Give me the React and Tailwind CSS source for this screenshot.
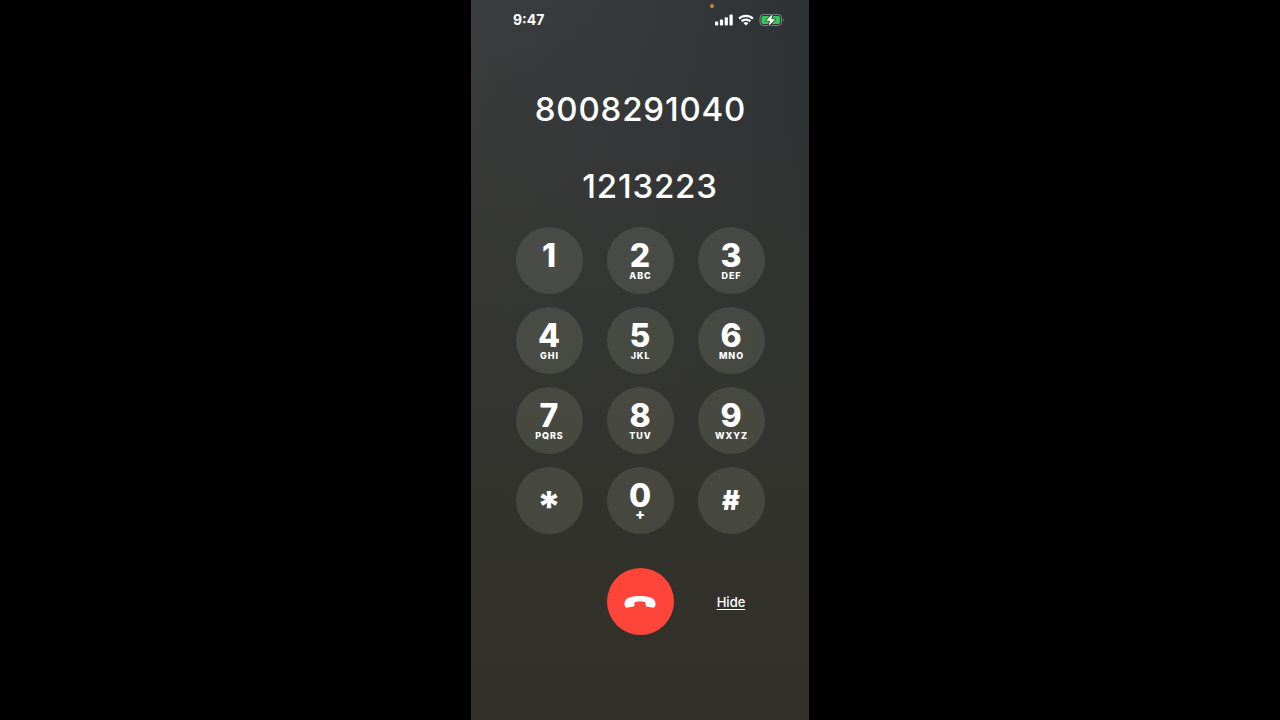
import { useState } from "react";

const keys = [
  { digit: "1", letters: "" },
  { digit: "2", letters: "ABC" },
  { digit: "3", letters: "DEF" },
  { digit: "4", letters: "GHI" },
  { digit: "5", letters: "JKL" },
  { digit: "6", letters: "MNO" },
  { digit: "7", letters: "PQRS" },
  { digit: "8", letters: "TUV" },
  { digit: "9", letters: "WXYZ" },
  { digit: "*" },
  { digit: "0", letters: "+" },
  { digit: "#" },
];

function SignalIcon() {
  return (
    <svg width="18" height="12" viewBox="0 0 18 12" fill="currentColor" aria-hidden="true">
      <rect x="0" y="7.5" width="3.2" height="4" rx="0.9" />
      <rect x="4.9" y="5.6" width="3.2" height="5.9" rx="0.9" />
      <rect x="9.7" y="3.2" width="3.2" height="8.3" rx="0.9" />
      <rect x="14.5" y="0.5" width="3.2" height="11" rx="0.9" />
    </svg>
  );
}

function WifiIcon() {
  return (
    <svg width="16" height="12" viewBox="0 0 16 12" fill="none" stroke="currentColor" strokeWidth="2.3" aria-hidden="true">
      <path d="M1.1 4.6a9.9 9.9 0 0 1 13.8 0" />
      <path d="M3.6 7.4a6.2 6.2 0 0 1 8.8 0" />
      <path d="M8 11.6 5.6 9.2a3.4 3.4 0 0 1 4.8 0z" fill="currentColor" stroke="none" />
    </svg>
  );
}

function BatteryIcon() {
  return (
    <svg width="26" height="14" viewBox="0 0 26 14" aria-hidden="true">
      <rect x="1" y="1.5" width="21.5" height="11" rx="3.4" fill="none" stroke="#7f8482" strokeWidth="1" />
      <path d="M23.8 5.2c1.2.5 1.2 3.1 0 3.6z" fill="#7f8482" />
      <rect x="2.4" y="2.9" width="18.7" height="8.2" rx="2" fill="#35c75a" />
      <path
        d="M13.6 1 7 7.7h4L9.5 13.1l6.9-6.8h-4z"
        fill="#fff"
        stroke="#30353a"
        strokeWidth="1.6"
        strokeLinejoin="round"
        paintOrder="stroke"
      />
    </svg>
  );
}

function HangUpIcon() {
  return (
    <svg width="32" height="14" viewBox="0 0 32 14" fill="currentColor" aria-hidden="true">
      <path d="M16 1C9.5 1 4 2.1 1.7 4.9.4 6.5.2 8.9.8 10.8c.4 1.400 1.500 2 2.900 1.800l4.900-.8c1.300-.2 1.800-.8 1.800-2V8.300c0-.8.3-1.200 1-1.300 1.300-.3 2.800-.4 4.600-.4s3.300.1 4.600.4c.7.1 1 .5 1 1.300v1.500c0 1.200.5 1.800 1.800 2l4.900.8c1.400.2 2.500-.4 2.900-1.800.6-1.900.4-4.300-.9-5.900C28 2.100 22.500 1 16 1z" />
    </svg>
  );
}

function KeyButton({ digit, letters, onPress }) {
  return (
    <button
      type="button"
      onClick={() => onPress(digit)}
      className="flex size-[67px] flex-col items-center rounded-full bg-[#f0f4da]/11 active:bg-white/30"
    >
      {digit === "*" && <span className="pt-4 text-[42px] leading-12 font-extrabold">*</span>}
      {digit === "#" && <span className="pt-4 text-[27px] leading-9 font-black">#</span>}
      {letters !== undefined && (
        <>
          <span className="pt-[13px] text-[32px] leading-8 font-extrabold">{digit}</span>
          {letters === "+" ? (
            <span className="text-sm leading-1 font-black">+</span>
          ) : (
            <span className="pl-px text-[9px] leading-2 font-extrabold tracking-widest">{letters}</span>
          )}
        </>
      )}
    </button>
  );
}

export default function App() {
  const [entered, setEntered] = useState("1213223");
  const [open, setOpen] = useState(true);

  return (
    <div className="flex min-h-screen justify-center bg-black font-['Inter',sans-serif] text-white">
      <main className="w-full max-w-[338px] bg-[linear-gradient(to_bottom,transparent,#33342f_60%,#313028),linear-gradient(to_right,#3b3c3d,#373b3d_35%,#2e3234)]">
        {/* Status bar */}
        <header className="relative flex h-10 items-center justify-between pr-6 pl-[42px]">
          <time className="text-sm font-bold">9:47</time>
          <span className="absolute top-1 right-[95px] size-1 rounded-full bg-[#c98a2c]" />
          <div className="flex items-center gap-[5px]">
            <SignalIcon />
            <WifiIcon />
            <BatteryIcon />
          </div>
        </header>

        <h1 className="pt-[49px] pl-px text-center text-[33px] leading-10 font-medium tracking-wide">8008291040</h1>
        <p className="mt-[37px] h-10 pl-5 text-center text-[33px] leading-10 font-medium tracking-wide">{entered}</p>

        {/* Keypad */}
        <div className="mt-[21px] grid grid-cols-[repeat(3,67px)] justify-center gap-x-6 gap-y-[13px]">
          {open &&
            keys.map((key) => (
              <KeyButton
                key={key.digit}
                digit={key.digit}
                letters={key.letters}
                onPress={(digit) => setEntered(entered + digit)}
              />
            ))}
        </div>

        <div className="mt-[34px] grid grid-cols-[repeat(3,67px)] items-center justify-center gap-x-6">
          <button
            type="button"
            aria-label="End call"
            className="col-start-2 flex size-[67px] items-center justify-center rounded-full bg-[#ff453a]"
          >
            <HangUpIcon />
          </button>
          <button
            type="button"
            onClick={() => setOpen(!open)}
            className="justify-self-center text-[13px] leading-5 font-medium underline underline-offset-2"
          >
            Hide
          </button>
        </div>
      </main>
    </div>
  );
}
